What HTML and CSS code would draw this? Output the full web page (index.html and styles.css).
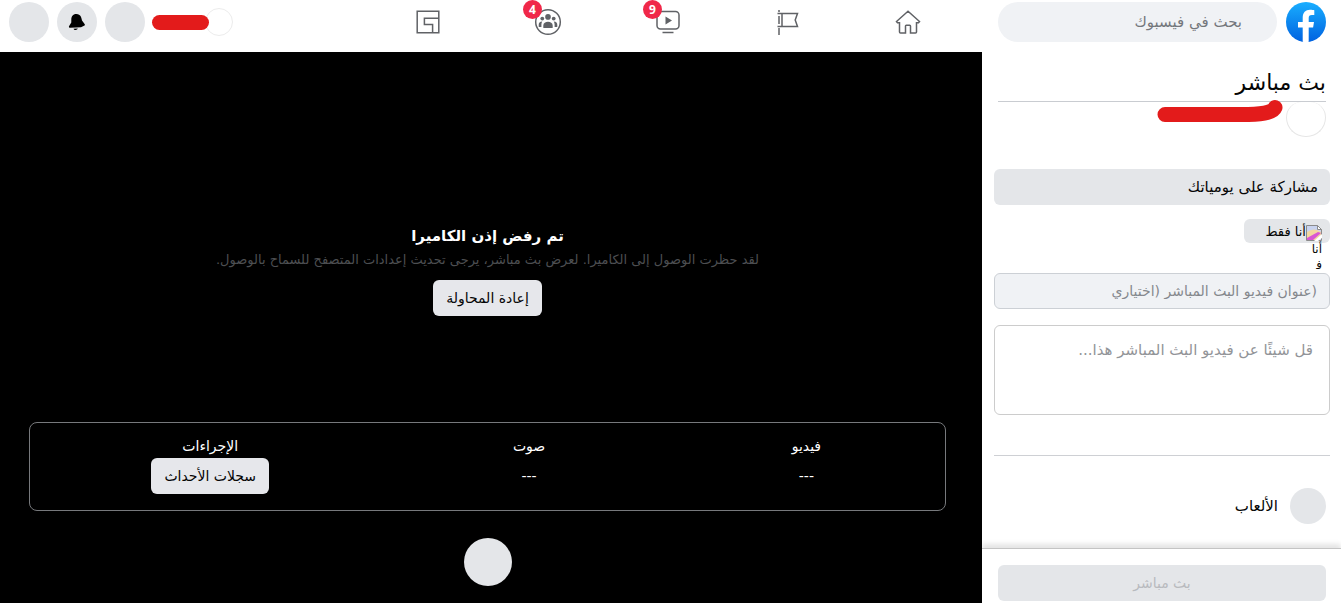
FILE: index.html
```html
<!DOCTYPE html>
<html lang="ar" dir="rtl">
<head>
    <meta charset="UTF-8">
    <title>بث مباشر</title>
    <link rel="stylesheet" href="styles.css">
</head>
<body>
    <header class="topbar">
        <div class="search-area">
            <a href="#" class="logo" aria-label="فيسبوك">
                <svg width="40" height="40" viewBox="0 0 40 40">
                    <defs>
                        <linearGradient id="blue" x1="0" y1="0" x2="0" y2="1">
                            <stop offset="0" stop-color="#19aeff"/>
                            <stop offset="1" stop-color="#0062e0"/>
                        </linearGradient>
                    </defs>
                    <circle cx="20" cy="20" r="20" fill="url(#blue)"/>
                    <path d="M16.700 39.800V25.600H12V20h4.700v-4.200c0-5.200 2.800-8 7.300-8 1.800 0 3.500.2 4.300.4v4.900h-2.400c-2.500 0-3.200 1.100-3.200 3V20h5.300l-.9 5.600h-4.400v14.200a20 20 0 0 1-6 0z" fill="#fff"/>
                </svg>
            </a>
            <input type="search" class="search" placeholder="بحث في فيسبوك" aria-label="بحث في فيسبوك">
        </div>
        <nav class="nav">
            <a href="#" aria-label="الرئيسية">
                <svg class="icon" viewBox="0 0 28 28">
                    <path d="M14 3.200L2.500 13.500l1 1.200h2V24q0 1 1 1h5V18q0-.8.8-.8h3.400q.8 0 .8.800v7h5q1 0 1-1v-9.300h2l1-1.200z"/>
                </svg>
            </a>
            <a href="#" aria-label="الصفحات">
                <svg class="icon" viewBox="0 0 28 28">
                    <path d="M5 2v2M5 8v8M5 20v7M3.500 5.500h20l-2.300 6.500 2.300 6.500h-20M8 5.500v13"/>
                </svg>
            </a>
            <a href="#" aria-label="الفيديو">
                <svg class="icon" viewBox="0 0 28 28">
                    <rect x="3" y="3.500" width="22" height="17.500" rx="3.500"/>
                    <path d="M8.500 24.500h11"/>
                    <path d="M11.500 8.500v8l6.500-4z" class="fill"/>
                </svg>
                <span class="badge">9</span>
            </a>
            <a href="#" aria-label="المجموعات">
                <svg class="icon" viewBox="0 0 28 28">
                    <circle cx="14" cy="14" r="12.300"/>
                    <g class="fill">
                        <circle cx="14" cy="8.900" r="2.800"/>
                        <circle cx="8.300" cy="10.600" r="1.900"/>
                        <circle cx="19.700" cy="10.600" r="1.900"/>
                        <path d="M9.300 19.500v-2c0-5 9.400-5 9.400 0v2q0 .6-.6.600H9.900q-.6 0-.6-.6z"/>
                        <path d="M8.200 13.600c-2.500 0-3.500 1.600-3.500 3.300v1.600q0 .5.500.500h2.200v-2.200q0-1.800.8-3.200z"/>
                        <path d="M19.800 13.600c2.500 0 3.500 1.600 3.500 3.300v1.600q0 .5-.5.500h-2.200v-2.200q0-1.800-.8-3.200z"/>
                    </g>
                </svg>
                <span class="badge">4</span>
            </a>
            <a href="#" aria-label="الألعاب">
                <svg class="icon" viewBox="0 0 28 28">
                    <path d="M3.200 3.200h21.600v7H10.400v6.200h8.200v8.400H3.200zM24.800 10.200v14.600h-6.200"/>
                </svg>
            </a>
        </nav>
        <div class="account">
            <span class="face"></span>
            <span class="hidden-name"></span>
            <button class="round" aria-label="القائمة"></button>
            <button class="round" aria-label="الإشعارات">
                <svg width="20" height="20" viewBox="0 0 20 20">
                    <path d="M9.300 2C5.800 2 4.300 4.500 4.300 7.500v3L2 14.200c-.3.900.2 1.500 1 1.500l11-.5 3.500-1.600c.6-.5.500-1.100.1-1.600l-2.600-3.500-.7-2.800C13.600 3.300 11.700 2 9.300 2zM6.500 16.800c.6 1.800 3.400 1.700 4.300-.2z"/>
                </svg>
            </button>
            <button class="round" aria-label="الحساب"></button>
        </div>
    </header>

    <div class="page">
        <aside class="sidebar">
            <h1>بث مباشر</h1>
            <div class="profile">
                <span class="avatar"></span>
                <svg class="scribble" width="128" height="26" viewBox="0 0 128 26">
                    <path d="M9 16.500H85C104 16.500 117 15 119 9.500"/>
                </svg>
            </div>
            <button class="share">مشاركة على يومياتك</button>
            <button class="privacy">
                <span class="privacy-icon">
                    <svg width="16" height="16" viewBox="0 0 16 16">
                        <path d="M.5.5h11l4 4v11H.5z" fill="#c9d3ee" stroke="#8b8b8b"/>
                        <path d="M1 7q7-5 14 0v3L10 15H1z" fill="#f3d7a0"/>
                        <path d="M1 13L12 7l3 1-8 7H1z" fill="#d957d3"/>
                        <path d="M11.500.5v4h4z" fill="#fff" stroke="#8b8b8b"/>
                        <path d="M8 16l8-7v4l-4 3z" fill="#fff"/>
                    </svg>
                    <span class="privacy-alt">أنا<br>ف&zwj;</span>
                </span>
                أنا فقط
            </button>
            <input type="text" class="title-input" dir="ltr" placeholder="&#8295;عنوان فيديو البث المباشر (اختياري&#8297;)" aria-label="عنوان فيديو البث المباشر">
            <textarea class="about" placeholder="قل شيئًا عن فيديو البث المباشر هذا..." aria-label="وصف البث"></textarea>
            <hr>
            <a href="#" class="games"><span class="games-icon"></span>الألعاب</a>
            <footer class="go-live">
                <button disabled>بث مباشر</button>
            </footer>
        </aside>

        <main class="camera">
            <section class="message">
                <h2>تم رفض إذن الكاميرا</h2>
                <p>لقد حظرت الوصول إلى الكاميرا. لعرض بث مباشر، يرجى تحديث إعدادات المتصفح للسماح بالوصول.</p>
                <button class="light">إعادة المحاولة</button>
            </section>
            <div class="stats">
                <table>
                    <tr><th>فيديو</th><th>صوت</th><th class="actions">الإجراءات</th></tr>
                    <tr><td>---</td><td>---</td><td><button class="light">سجلات الأحداث</button></td></tr>
                </table>
            </div>
            <button class="record" aria-label="تسجيل"></button>
        </main>
    </div>
</body>
</html>
```
FILE: styles.css
```css
* {
    box-sizing: border-box;
}
body {
    margin: 0;
    min-height: 100vh;
    display: flex;
    flex-direction: column;
    font-family: "DejaVu Sans", sans-serif;
    font-size: 14px;
    color: #050505;
    background: #fff;
}
button, input, textarea {
    font-family: inherit;
    font-size: 14px;
    border: 0;
    margin: 0;
}
a {
    color: inherit;
    text-decoration: none;
}

/* top bar */
.topbar {
    display: flex;
    height: 52px;
    padding-bottom: 8px;
}
.search-area {
    width: 359px;
    display: flex;
    align-items: center;
    gap: 9px;
    padding: 0 15px 0 16px;
}
.logo, .logo svg {
    display: block;
}
.search {
    flex: 1;
    min-width: 0;
    height: 40px;
    padding: 0 35px;
    border-radius: 20px;
    background: #f0f2f5;
    font-size: 15px;
}
.search::placeholder {
    color: #74777c;
    opacity: 1;
}
.nav {
    display: flex;
    width: 600px;
    margin-right: 14px;
}
.nav a {
    position: relative;
    flex: 1;
    display: flex;
    align-items: center;
    justify-content: center;
}
.icon {
    width: 28px;
    height: 28px;
    fill: none;
    stroke: #606266;
    stroke-width: 1.500;
}
.icon .fill {
    fill: #606266;
    stroke: none;
}
.badge {
    position: absolute;
    top: 0;
    right: calc(50% + 6px);
    width: 19px;
    height: 19px;
    border-radius: 50%;
    background: #f02849;
    color: #fff;
    font: bold 12px/19px "Open Sans", sans-serif;
    text-align: center;
}
.account {
    flex: 1;
    display: flex;
    align-items: center;
    justify-content: flex-end;
    gap: 8px;
    padding-left: 9px;
}
.face {
    width: 28px;
    height: 28px;
    border: 1px solid #ececec;
    border-radius: 50%;
    margin-left: -12px;
}
.hidden-name {
    position: relative;
    width: 57px;
    height: 15px;
    margin-left: -1px;
    border-radius: 8px;
    background: #e31b1b;
}
.round {
    width: 40px;
    height: 40px;
    padding: 0;
    border-radius: 50%;
    background: #e4e6e9;
    display: flex;
    align-items: center;
    justify-content: center;
}

.page {
    flex: 1;
    display: flex;
}

/* sidebar */
.sidebar {
    width: 359px;
    display: flex;
    flex-direction: column;
    padding: 0 11px 0 12px;
}
h1 {
    margin: 0 4px;
    height: 50px;
    padding-top: 12px;
    border-bottom: 1px solid #c9ccd1;
    font-size: 22px;
    line-height: 38px;
    font-weight: normal;
}
.profile {
    display: flex;
    gap: 2px;
    height: 67px;
    padding: 0 4px;
}
.avatar {
    width: 40px;
    height: 35px;
    border: 1px solid #e6e6e6;
    border-top: 0;
    border-radius: 16px 16px 20px 20px;
}
.scribble {
    margin-top: -4px;
    fill: none;
    stroke: #e31b1b;
    stroke-width: 15;
    stroke-linecap: round;
}
.share {
    height: 36px;
    padding: 0 12px;
    border-radius: 6px;
    background: #e4e6e9;
    text-align: right;
    color: #050505;
    font-size: 15px;
}
.privacy {
    align-self: flex-start;
    display: flex;
    align-items: center;
    width: 86px;
    height: 24px;
    margin: 14px 0 30px;
    padding: 0 8px;
    border-radius: 6px;
    background: #e4e6e9;
    color: #050505;
    font-size: 13px;
}
.privacy-icon {
    position: relative;
    width: 16px;
    height: 16px;
}
.privacy-icon svg {
    display: block;
    margin-top: 2px;
}
.privacy-alt {
    position: absolute;
    top: 18px;
    right: 0;
    font-size: 12px;
    line-height: 16px;
    text-align: right;
}
.title-input {
    height: 36px;
    padding: 0 12px;
    border: 1px solid #ccd0d5;
    border-radius: 6px;
    background: #f0f2f5;
    text-align: right;
}
.title-input::placeholder {
    color: #85888d;
    opacity: 1;
}
.about {
    height: 90px;
    margin-top: 16px;
    padding: 14px 16px;
    border: 1px solid #ccc;
    border-radius: 6px;
    font-size: 15px;
    line-height: 20px;
    resize: none;
}
.about::placeholder {
    color: #929498;
    opacity: 1;
}
hr {
    width: 100%;
    margin: 40px 0 32px;
    border: 0;
    border-top: 1px solid #ced0d4;
}
.games {
    display: flex;
    align-items: center;
    gap: 12px;
    padding: 0 4px;
    font-size: 15px;
}
.games-icon {
    width: 36px;
    height: 36px;
    border-radius: 50%;
    background: #e4e6e9;
}
.go-live {
    margin: auto -11px 0 -12px;
    padding: 16px 15px 2px 16px;
    border-top: 1px solid #c4c4c4;
    box-shadow: 0 -4px 5px #e4e4e4;
}
.go-live button {
    display: block;
    width: 100%;
    height: 36px;
    border-radius: 6px;
    background: #e4e6e9;
    color: #b8babe;
}

/* camera preview */
.camera {
    flex: 1;
    display: flex;
    flex-direction: column;
    align-items: center;
    padding: 0 36px 17px 29px;
    background: #000;
    color: #fff;
}
.message {
    flex: 1;
    display: flex;
    flex-direction: column;
    align-items: center;
    justify-content: flex-end;
    padding-bottom: 106px;
}
h2 {
    margin: 0;
    font-size: 15px;
    line-height: 24px;
}
.message p {
    margin: 2px 0 10px;
    font-size: 13px;
    line-height: 20px;
    color: #4d4f52;
}
.light {
    height: 36px;
    padding: 0 13px;
    border-radius: 6px;
    background: #e6e7eb;
    color: #050505;
}
.stats {
    width: 100%;
    height: 89px;
    padding-top: 11px;
    border: 1px solid #77797c;
    border-radius: 8px;
}
.stats table {
    width: 100%;
    border-collapse: collapse;
    table-layout: fixed;
}
.stats th {
    width: 30%;
    padding: 0;
    font-weight: normal;
    line-height: 24px;
}
.stats .actions {
    width: 39%;
}
.stats td {
    padding: 0;
    text-align: center;
}
.record {
    width: 48px;
    height: 48px;
    margin-top: 27px;
    border-radius: 50%;
    background: #e4e6e9;
}
```
